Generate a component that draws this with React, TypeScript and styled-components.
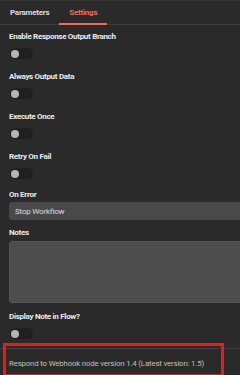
import styled, { createGlobalStyle } from "styled-components";

const GlobalStyle = createGlobalStyle`
	html, body {
		margin: 0;
		padding: 0;
		background: #2a2a2a;
		overflow: hidden;
	}
`;

const Page = styled.div`
	position: relative;
	width: 240px;
	height: 375px;
	overflow: hidden;
	background: #2a2a2a;
	border-top: 1px solid #363636;
	box-sizing: border-box;
	font-family: Roboto, "Liberation Sans", Arial, sans-serif;
	color: #e6e6e6;
`;

const TabBar = styled.div`
	display: flex;
	height: 23px;
	border-bottom: 1px solid #3d3d3d;
`;

const Tab = styled.div<{ $active?: boolean }>`
	display: flex;
	align-items: center;
	padding: 0 10px;
	font-size: 8px;
	font-weight: 700;
	letter-spacing: -0.25px;
	color: ${(props) => (props.$active ? "#f0695a" : "#dcdcdc")};
	border-bottom: 2px solid ${(props) => (props.$active ? "#f0695a" : "transparent")};
	margin-bottom: -1px;
`;

const Content = styled.div`
	display: flex;
	flex-direction: column;
	padding: 6px 0 0 9px;
`;

const Field = styled.div<{ $mb?: number }>`
	display: flex;
	flex-direction: column;
	margin-bottom: ${(props) => props.$mb ?? 12}px;
`;

const Label = styled.div`
	font-size: 8px;
	font-weight: 700;
	line-height: 12px;
	letter-spacing: -0.3px;
	color: #ececec;
	white-space: nowrap;
`;

const Toggle = styled.div`
	margin-top: 5px;
	margin-left: 1px;
	width: 23px;
	height: 11px;
	border-radius: 6px;
	background: #1f1f1f;
	position: relative;
	&::after {
		content: "";
		position: absolute;
		left: 1px;
		top: 1.5px;
		width: 8px;
		height: 8px;
		border-radius: 50%;
		background: #b5b5b5;
	}
`;

const Select = styled.div`
	margin-top: 1px;
	width: 260px;
	height: 18px;
	box-sizing: border-box;
	display: flex;
	align-items: center;
	padding-left: 6px;
	background: #494949;
	border-radius: 3px;
	font-size: 8px;
	letter-spacing: -0.2px;
	color: #dedede;
`;

const Notes = styled.div`
	margin-top: 2px;
	width: 260px;
	height: 62px;
	box-sizing: border-box;
	background: #4d4d4d;
	border: 1px solid #555555;
	border-radius: 3px;
`;

const Footer = styled.div`
	border-top: 1px solid #3f3f3f;
	margin-top: -3px;
	height: 28px;
	display: flex;
	align-items: center;
	padding-left: 9px;
	font-size: 7.8px;
	letter-spacing: -0.15px;
	color: #c6bfb3;
	white-space: nowrap;
`;

const Highlight = styled.div`
	position: absolute;
	left: 3px;
	top: 342px;
	width: 221px;
	height: 34px;
	box-sizing: border-box;
	border: 3px solid #e11d1d;
	pointer-events: none;
`;

function ToggleField({ label, mb }: { label: string; mb?: number }) {
	return (
		<Field $mb={mb}>
			<Label>{label}</Label>
			<Toggle />
		</Field>
	);
}

export default function App() {
	return (
		<>
			<GlobalStyle />
			<Page>
				<TabBar>
					<Tab>Parameters</Tab>
					<Tab $active>Settings</Tab>
				</TabBar>
				<Content>
					<ToggleField label="Enable Response Output Branch" />
					<ToggleField label="Always Output Data" />
					<ToggleField label="Execute Once" />
					<ToggleField label="Retry On Fail" mb={10} />
					<Field $mb={7}>
						<Label>On Error</Label>
						<Select>Stop Workflow</Select>
					</Field>
					<Field $mb={8}>
						<Label>Notes</Label>
						<Notes />
					</Field>
					<ToggleField label="Display Note in Flow?" />
				</Content>
				<Footer>Respond to Webhook node version 1.4 (Latest version: 1.5)</Footer>
				<Highlight />
			</Page>
		</>
	);
}
